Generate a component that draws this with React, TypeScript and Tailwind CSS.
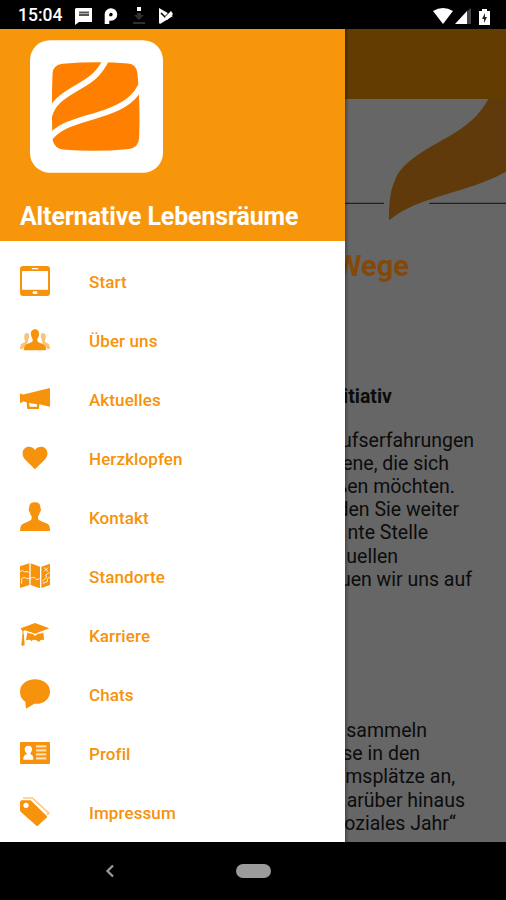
import React from "react";

type MenuItem = {
  label: string;
  // vector body, drawn on a 90x90 grid
  icon: React.ReactNode;
};

const menuItems: MenuItem[] = [
  {
    label: "Start",
    icon: (
      <>
        <path
          fillRule="evenodd"
          d="M9 0H81Q90 0 90 9V81Q90 90 81 90H9Q0 90 0 81V9Q0 0 9 0ZM6 15V71H84V15Z"
        />
        <rect x="35" y="6" width="20" height="4" rx="2" fill="#fff" />
        <rect x="38" y="76" width="14" height="8" rx="3" fill="#fff" />
      </>
    ),
  },
  {
    label: "Über uns",
    icon: (
      <>
        <path
          opacity="0.55"
          d="M20 24C27 24 28 31 27 38L24 46V52L16 62L8 72H0Q0 59 7 55L15 51V46C11 40 12 24 20 24ZM70 24C63 24 62 31 63 38L66 46V52L74 62L82 72H90Q90 59 83 55L75 51V46C79 40 78 24 70 24Z"
        />
        <path d="M45 13C54 13 58 20 57 29C56 36 53 39 52 43V49C55 54 69 55 74 61Q79 66 79 76H11Q11 66 16 61C21 55 35 54 38 49V43C37 39 34 36 33 29C32 20 36 13 45 13Z" />
      </>
    ),
  },
  {
    label: "Aktuelles",
    icon: (
      <path
        fillRule="evenodd"
        d="M90 12V68L58 61L57 74Q57 75 54 75H24Q21 75 21 72L20 55L7 52V56H0V29H7V32ZM27 57L29 68H51V61Z"
      />
    ),
  },
  {
    label: "Herzklopfen",
    icon: (
      <path d="M45 79L16 50C8 42 7 34 8 27C11 9 34 5 45 21C56 5 79 9 82 27C83 34 82 42 74 50Z" />
    ),
  },
  {
    label: "Kontakt",
    icon: (
      <path d="M44 1C57 1 62 8 61 18Q64 20 62 27L59 32Q58 39 54 43V51C60 60 82 61 87 70Q90 74 90 87H0Q0 74 4 70C11 61 30 60 35 51V43Q31 39 30 32L27 27Q25 20 28 18C26 8 32 1 44 1Z" />
    ),
  },
  {
    label: "Standorte",
    icon: (
      <>
        <path d="M0 16L28 7V72L0 81ZM32 7L60 17V82L32 72ZM64 17L90 8V72L64 81Z" />
        <path
          d="M0 32L8 28L13 33L22 31L25 36M5 68V52L15 49L20 53L33 51L43 49L49 56L59 53M72 20L84 31M84 20L73 31M67 61L80 48L77 42L89 34M68 67L82 62V53L90 48"
          fill="none"
          stroke="#fff"
          strokeWidth="3"
          opacity="0.85"
        />
      </>
    ),
  },
  {
    label: "Karriere",
    icon: (
      <>
        <path d="M45 9L88 25L45 41L15 31L10 34L11 43Q14 46 12 50L14 75L6 78L4 74L7 50Q5 46 8 43L7 33L2 25Z" />
        <path d="M22 37L31 40Q39 38 45 48Q51 39 61 40L70 36L72 60Q61 57 57 66Q47 57 45 61Q41 57 34 64Q31 57 18 61Z" />
        <path
          d="M23 38Q37 37 45 45Q53 37 69 38"
          fill="none"
          stroke="#fff"
          strokeWidth="3"
        />
      </>
    ),
  },
  {
    label: "Chats",
    icon: (
      <path d="M45 1C70 1 90 16 90 38C90 61 68 77 43 74L18 89L16 68C5 61 0 50 0 38C0 16 20 1 45 1Z" />
    ),
  },
  {
    label: "Profil",
    icon: (
      <>
        <rect x="0" y="12" width="90" height="66" rx="3" />
        <path
          fill="#fff"
          d="M25 23C33 23 37 28 36 35Q34 43 31 46V49C37 51 40 54 40 65H10C10 54 14 51 20 49V46Q15 43 14 35C13 28 18 23 25 23Z"
        />
        <path
          d="M48 25H79M48 37H79M48 49H79M48 61H79"
          stroke="#fff"
          strokeWidth="7"
          opacity="0.7"
        />
      </>
    ),
  },
  {
    label: "Impressum",
    icon: (
      <>
        <path
          d="M9 3H37L86 48L81 54"
          fill="none"
          stroke="currentColor"
          strokeWidth="5"
          opacity="0.5"
        />
        <path
          fillRule="evenodd"
          d="M0 14L4 10H32L81 58V61L53 87H50L2 44L0 40ZM10 25A8 8 0 1 0 26 25A8 8 0 1 0 10 25Z"
        />
      </>
    ),
  },
];

const firstParagraph = [
  { text: "ufserfahrungen", className: "w-[129px]" },
  { text: "ene, die sich", className: "w-[104px]" },
  { text: "ßen möchten.", className: "w-[110px]" },
  { text: "den Sie weiter", className: "w-[114px]" },
  { text: "nte Stelle", className: "w-[83px]" },
  { text: "uellen", className: "w-[53px]" },
  { text: "uen wir uns auf", className: "w-[127px]" },
];

const secondParagraph = [
  { text: "sammeln", className: "w-[82px]" },
  { text: "se in den", className: "w-[75px]" },
  { text: "msplätze an,", className: "w-[110px]" },
  { text: "arüber hinaus", className: "w-[120px]" },
  { text: "oziales Jahr“", className: "w-[111px]" },
];

const StatusBar = () => (
  <header className="flex h-[29px] shrink-0 items-center bg-black pt-[3px] text-white">
    <span className="ml-[18px] w-[44px] text-[17.5px] font-medium leading-none whitespace-nowrap">
      15:04
    </span>
    <svg className="ml-[13px] h-[17px] w-[17px]" viewBox="0 0 17 17" fill="currentColor">
      <path d="M1 0H17V14H4L0 17V1Z" />
      <path d="M4 4.5H14M4 7H14" stroke="#555" strokeWidth="2" />
    </svg>
    <svg className="ml-[12px] h-[16px] w-[14px]" viewBox="0 0 14 16">
      <path
        d="M3 16V7A4 4 0 1 1 7 10.5H5"
        fill="none"
        stroke="currentColor"
        strokeWidth="4.6"
      />
    </svg>
    <svg className="ml-[14px] h-[18px] w-[14px]" viewBox="0 0 14 18">
      <rect x="5" y="0" width="4" height="4" fill="#fff" />
      <path d="M5 6H9V8H12L7 13L2 8H5ZM1 15H13V17H1Z" fill="#303030" />
    </svg>
    <svg className="ml-[12px] h-[16px] w-[16px]" viewBox="0 0 16 16">
      <path d="M1 0L15 8L2 16L1 15Z" fill="#fff" />
      <path d="M3 5L7 9L13 3" fill="none" stroke="#000" strokeWidth="1.5" />
      <path d="M7 9L13 3L15 6L9 12Z" fill="#fff" />
    </svg>
    <div className="mr-[16px] ml-auto flex items-center">
      <svg className="h-[16px] w-[20px]" viewBox="0 0 20 16" fill="currentColor">
        <path d="M0 3Q10-3 20 3L10 16Z" />
      </svg>
      <svg className="ml-[2px] h-[16px] w-[17px]" viewBox="0 0 17 16">
        <path d="M0 16L12 3V16Z" fill="#fff" />
        <path d="M12 3L16 0V16H12Z" fill="#444" />
      </svg>
      <svg className="ml-[7px] h-[17px] w-[11px]" viewBox="0 0 11 17">
        <path d="M0 3H3V1H8V3H11V17H0Z" fill="#fff" />
        <path d="M6 5L3 11H5V15L8 9H6Z" fill="#222" />
      </svg>
    </div>
  </header>
);

const Logo = () => (
  <svg className="ml-[30px] h-[133px] w-[133px] shrink-0" viewBox="90 34 401 400">
    <rect x="90" y="34" width="401" height="400" rx="60" fill="#fff" />
    <path
      d="M188 105Q290 97 385 104Q411 105 414 134Q423 230 419 330Q417 358 389 362Q290 372 188 364Q165 360 158 335Q154 230 158 134Q160 108 188 105Z"
      fill="#ff8000"
    />
    <path
      d="M322 88C300 135 276 152 236 175C184 205 158 224 148 262M430 160C410 208 376 232 318 252C238 279 178 286 146 334"
      fill="none"
      stroke="#fff"
      strokeWidth="18"
    />
  </svg>
);

const Drawer = () => (
  <aside className="flex w-[345px] shrink-0 flex-col bg-white">
    <div className="flex h-[212px] shrink-0 flex-col bg-[#f7960b] pt-[10.5px]">
      <Logo />
      <h1 className="mt-[29.5px] ml-[20px] text-[24.9px] font-bold leading-[30px] tracking-[-0.1px] whitespace-nowrap text-white">
        Alternative Lebensräume
      </h1>
    </div>
    <nav className="flex flex-col pt-[10.5px]">
      {menuItems.map((item) => (
        <a
          key={item.label}
          className="flex h-[59px] shrink-0 items-center pl-[20px] text-[#f6920b]"
        >
          <svg className="h-[30px] w-[30px] shrink-0" viewBox="0 0 90 90" fill="currentColor">
            {item.icon}
          </svg>
          <span className="mt-[4px] ml-[39px] text-[17px] font-medium tracking-[0.1px]">
            {item.label}
          </span>
        </a>
      ))}
    </nav>
  </aside>
);

const Paragraph = ({ lines }: { lines: { text: string; className: string }[] }) => (
  <div className="text-[19.5px] leading-[23.2px]">
    {lines.map((line) => (
      <p key={line.text} className={`flex justify-end whitespace-nowrap ${line.className}`}>
        {line.text}
      </p>
    ))}
  </div>
);

const DimmedPage = () => (
  <main className="relative flex min-w-0 flex-1 flex-col overflow-hidden bg-[#666] text-[#0c0c0c]">
    <div className="h-[69.5px] shrink-0 bg-[#633c02]" />
    <svg className="h-[122px] w-[161px] shrink-0" viewBox="30 212 483 366">
      <path d="M30 525H147M283 525H513" stroke="#222" strokeWidth="4" />
      <path
        d="M460 212C432 262 400 290 340 325C250 375 200 405 180 455C165 490 162 520 162 576C200 545 240 528 283 514C360 488 440 470 513 430V212Z"
        fill="#613a0b"
      />
    </svg>
    <h2 className="mt-[27px] flex w-[64px] justify-end text-[29px] font-bold leading-[36px] text-[#83490a]">
      Wege
    </h2>
    <h3 className="mt-[101px] flex w-[47px] justify-end text-[19.5px] font-bold leading-[24px]">
      itiativ
    </h3>
    <div className="mt-[20px]">
      <Paragraph lines={firstParagraph} />
    </div>
    <div className="mt-[128px]">
      <Paragraph lines={secondParagraph} />
    </div>
    <div className="absolute inset-y-0 left-0 w-[4px] bg-linear-to-r from-black/30 to-transparent" />
  </main>
);

const NavigationBar = () => (
  <footer className="flex h-[58px] shrink-0 items-center bg-black">
    <svg className="ml-[105px] h-[14px] w-[10px]" viewBox="0 0 10 14">
      <path d="M8 1.5L2.5 7L8 12.5" fill="none" stroke="#999" strokeWidth="2.3" />
    </svg>
    <div className="ml-[121px] h-[14px] w-[35px] rounded-full bg-[#9b9b9b]" />
  </footer>
);

const App: React.FC = () => {
  return (
    <div className="flex h-[900px] w-[506px] flex-col overflow-hidden bg-black font-[Roboto,sans-serif]">
      <StatusBar />
      <div className="flex min-h-0 flex-1 overflow-hidden">
        <Drawer />
        <DimmedPage />
      </div>
      <NavigationBar />
    </div>
  );
};

export default App;
